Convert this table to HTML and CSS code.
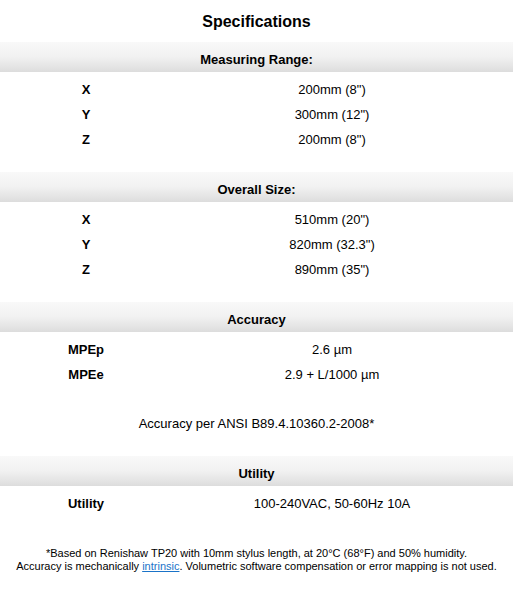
FILE: index.html
```html
<!DOCTYPE html>
<html>
<head>
<meta charset="utf-8">
<link rel="stylesheet" href="styles.css">
</head>
<body>
<div class="page">
  <h1 class="title">Specifications</h1>

  <section class="section">
    <div class="bar">Measuring Range:</div>
    <div class="rows">
      <div class="row"><span class="label">X</span><span class="value">200mm (8")</span></div>
      <div class="row"><span class="label">Y</span><span class="value">300mm (12")</span></div>
      <div class="row"><span class="label">Z</span><span class="value">200mm (8")</span></div>
    </div>
  </section>

  <section class="section">
    <div class="bar">Overall Size:</div>
    <div class="rows">
      <div class="row"><span class="label">X</span><span class="value">510mm (20")</span></div>
      <div class="row"><span class="label">Y</span><span class="value">820mm (32.3")</span></div>
      <div class="row"><span class="label">Z</span><span class="value">890mm (35")</span></div>
    </div>
  </section>

  <section class="section">
    <div class="bar">Accuracy</div>
    <div class="rows">
      <div class="row"><span class="label">MPEp</span><span class="value">2.6 µm</span></div>
      <div class="row"><span class="label">MPEe</span><span class="value">2.9 + L/1000 µm</span></div>
      <p class="note">Accuracy per ANSI B89.4.10360.2-2008*</p>
    </div>
  </section>

  <section class="section">
    <div class="bar">Utility</div>
    <div class="rows">
      <div class="row"><span class="label">Utility</span><span class="value">100-240VAC, 50-60Hz 10A</span></div>
    </div>
  </section>

  <p class="footnote">*Based on Renishaw TP20 with 10mm stylus length, at 20°C (68°F) and 50% humidity.<br>Accuracy is mechanically <a href="#">intrinsic</a>. Volumetric software compensation or error mapping is not used.</p>
</div>
</body>
</html>
```

FILE: styles.css
```css
html, body {
  margin: 0;
  padding: 0;
  background: #ffffff;
}

.page {
  font-family: "Liberation Sans", Arial, Helvetica, sans-serif;
  color: #000;
  font-size: 13px;
  width: 513px;
}

.title {
  margin: 0;
  box-sizing: border-box;
  height: 42px;
  padding-top: 2px;
  line-height: 40px;
  font-size: 16px;
  font-weight: bold;
  text-align: center;
}

.section {
  padding-bottom: 20px;
}

.bar {
  box-sizing: border-box;
  height: 30px;
  padding-top: 5px;
  line-height: 25px;
  text-align: center;
  font-weight: bold;
  font-size: 13px;
  background: linear-gradient(to bottom, #f9f9f9 0%, #f1f1f1 50%, #e3e3e3 85%, #dcdcdc 100%);
}

.rows {
  padding-top: 5px;
}

.row {
  display: grid;
  grid-template-columns: 172px 320px;
  height: 25px;
  line-height: 25px;
}

.label {
  text-align: center;
  font-weight: bold;
}

.value {
  text-align: center;
}

.note {
  margin: 24px 0 0;
  height: 25px;
  line-height: 25px;
  text-align: center;
}

.footnote {
  margin: 11px 0 0;
  font-size: 11px;
  line-height: 13px;
  text-align: center;
  color: #000;
}

.footnote a {
  color: #1a73c8;
  text-decoration: underline;
}
```
